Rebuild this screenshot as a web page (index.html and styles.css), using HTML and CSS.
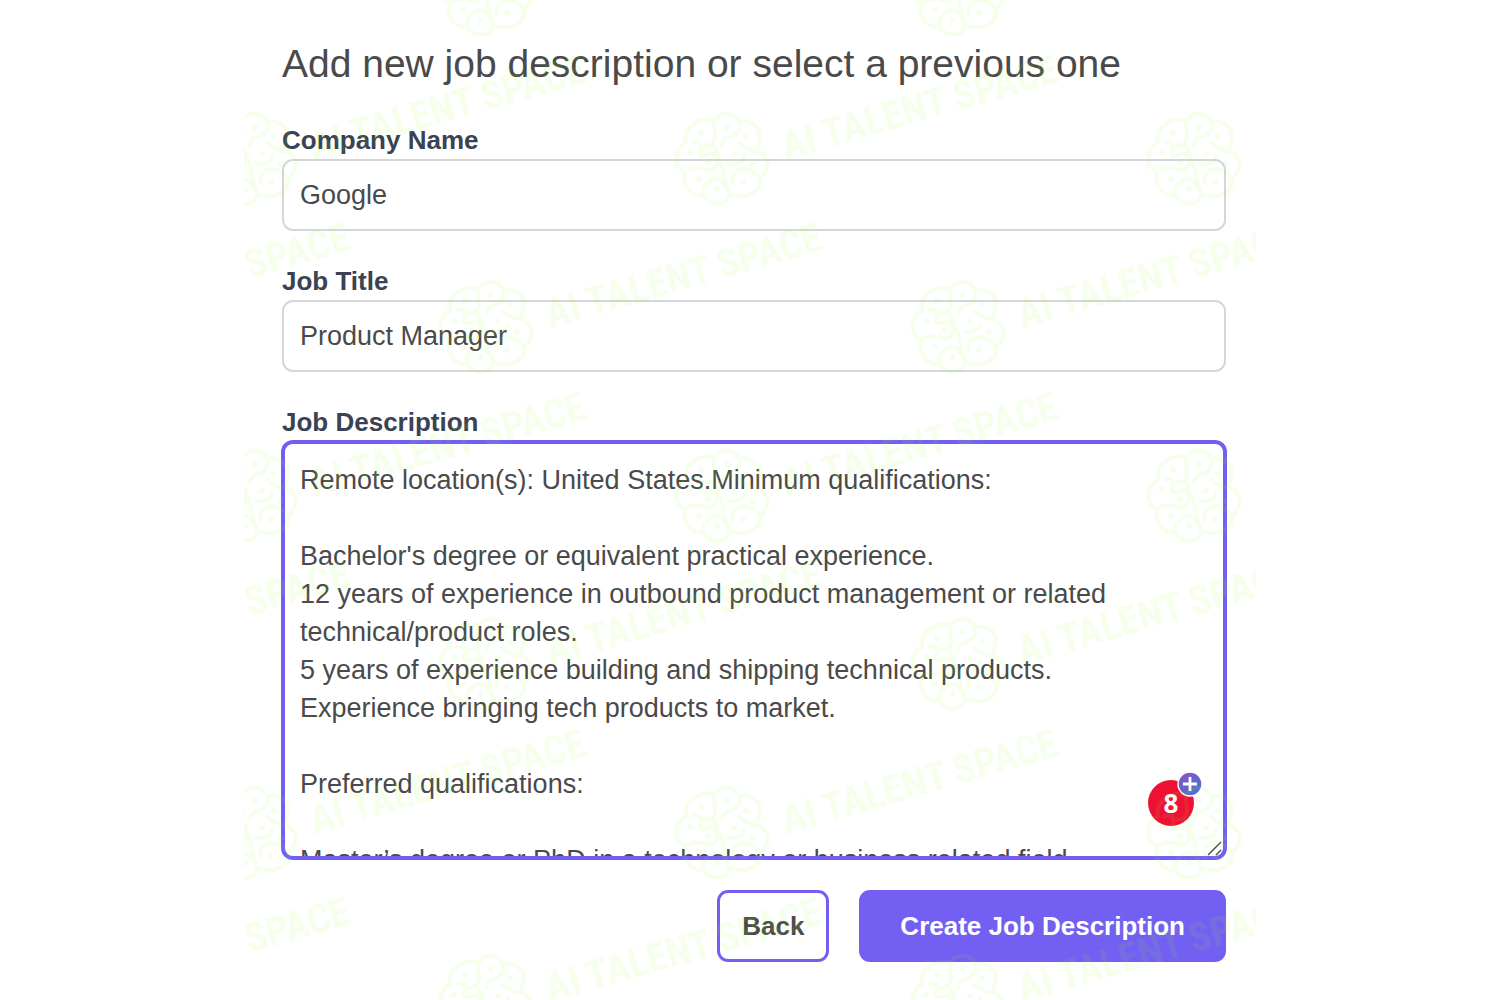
FILE: index.html
```
<!DOCTYPE html>
<html lang="en">
<head>
  <meta charset="UTF-8">
  <meta name="viewport" content="width=device-width, initial-scale=1.0">
  <title>Add new job description</title>
  <link rel="stylesheet" href="styles.css">
</head>
<body>
  <main class="page">
    <h1>Add new job description or select a previous one</h1>

    <form class="job-form">
      <div class="field">
        <label for="company">Company Name</label>
        <input type="text" id="company" value="Google">
      </div>

      <div class="field">
        <label for="title">Job Title</label>
        <input type="text" id="title" value="Product Manager">
      </div>

      <div class="field">
        <label for="description">Job Description</label>
        <div class="editor">
          <textarea id="description" spellcheck="false">Remote location(s): United States.Minimum qualifications:

Bachelor's degree or equivalent practical experience.
12 years of experience in outbound product management or related technical/product roles.
5 years of experience building and shipping technical products.
Experience bringing tech products to market.

Preferred qualifications:

Master’s degree or PhD in a technology or business related field.</textarea>
          <!-- writing assistant: issue count -->
          <div class="issues">8
            <svg class="issues-plus" viewBox="0 0 26 26" aria-hidden="true">
              <defs>
                <linearGradient id="plusFill" x1="0" y1="0" x2="1" y2="1">
                  <stop offset="0.2" stop-color="#7f58c4"/>
                  <stop offset="1" stop-color="#3f74d6"/>
                </linearGradient>
              </defs>
              <circle cx="13" cy="13" r="12" fill="url(#plusFill)" stroke="#fff" stroke-width="1.4"/>
              <path d="M13 6v14M6 13h14" stroke="#fff" stroke-width="2.8"/>
            </svg>
          </div>
          <svg class="grip" viewBox="0 0 16 16" aria-hidden="true">
            <path d="M1 15L14 2M9 15L14 10" fill="none" stroke="#444" stroke-width="1.4"/>
          </svg>
        </div>
      </div>

      <div class="actions">
        <button type="button" class="btn btn-outline">Back</button>
        <button type="submit" class="btn btn-primary">Create Job Description</button>
      </div>
    </form>

    <!-- repeating watermark over the whole page -->
    <svg class="watermark" aria-hidden="true">
      <defs>
        <g id="mark">
          <g fill="none" stroke="#9f3" stroke-width="4" stroke-linecap="round" stroke-linejoin="round">
            <path d="M-7-38C-1-48 14-47 18-37C32-39 41-31 38-19C37-14 36-11 36-8C46-5 49 5 45 12C44 15 42 17 39 19C41 34 25 41 9 35C5 47-11 48-17 37C-29 38-39 28-36 13C-47 9-48-9-35-17C-38-31-22-43-7-38Z"/>
            <path d="M-7-38C-8-28-4-24-7-18C-10-12-18-13-20-15M-9-15C-3-8-3-2 0 4C4 14 2 24 9 35"/>
            <path d="M-28-17C-22-19-18-15-20-9C-24-5-19-2-13-5C-4-8-2 3-6 9C-10 13-16 12-18 9M-34 12C-29 8-25 9-22 10M-12 23C-18 27-19 32-17 36M-12 23C-5 17 2 21 4 27"/>
            <path d="M18-37C20-30 16-24 9-22C4-21 1-17 1-13M18-16C25-11 29-8 36-8M7 4C15 7 22 3 23-3M23 10C30 10 34 14 39 19M12 24C9 15 17 9 25 11"/>
          </g>
          <g fill="#9f3">
            <circle cx="-20" cy="-26" r="3"/>
            <circle cx="6" cy="-32" r="3"/>
            <circle cx="25" cy="-22" r="3"/>
            <circle cx="-31" cy="-6" r="3"/>
            <circle cx="-13" cy="3" r="3"/>
            <circle cx="13" cy="-5" r="3"/>
            <circle cx="32" cy="5" r="3"/>
            <circle cx="-22" cy="20" r="3"/>
            <circle cx="-4" cy="30" r="3"/>
            <circle cx="22" cy="23" r="3"/>
          </g>
          <text class="watermark-text" transform="translate(65 1) rotate(-16)">AI TALENT SPACE</text>
        </g>
        <pattern id="tile" x="427" y="49" width="472" height="337" patternUnits="userSpaceOnUse">
          <use href="#mark" x="50" y="110"/>
          <use href="#mark" x="286" y="278"/>
          <use href="#mark" x="-186" y="278"/>
        </pattern>
      </defs>
      <rect width="100%" height="100%" fill="url(#tile)"/>
    </svg>
  </main>
</body>
</html>
```
FILE: styles.css
```
* {
  box-sizing: border-box;
}

body {
  margin: 0;
  background-color: #fff;
  color: #4a4a4a;
  font-family: "Liberation Sans", Helvetica, Arial, sans-serif;
  font-size: 26px;
  line-height: 38px;
}

.page {
  position: relative;
  max-width: 1012px;
  min-height: 100vh;
  margin: 0 auto;
  padding: 40px 30px 38px 38px;
  overflow: hidden;
}

h1 {
  margin: 0 0 33px;
  font-size: 39px;
  font-weight: 400;
  line-height: 48px;
}

.job-form {
  display: flex;
  flex-direction: column;
  gap: 31px;
}

.field {
  display: flex;
  flex-direction: column;
}

.field label {
  color: #3a4254;
  font-weight: 700;
}

.field input,
.field textarea {
  display: block;
  width: 100%;
  border: 2px solid #d4d6d8;
  border-radius: 11px;
  background-color: #fff;
  color: inherit;
  font: inherit;
  font-size: 27px;
  outline: none;
}

.field input {
  height: 72px;
  padding: 0 16px;
}

.editor {
  position: relative;
}

/* description is shown in its focused state */
.field textarea {
  height: 418px;
  padding: 17px 15px;
  border: 3px solid #735ff2;
  box-shadow: 0 0 0 1px #735ff2;
  overflow: hidden;
  resize: none;
}

.issues {
  position: absolute;
  right: 32px;
  bottom: 33px;
  width: 46px;
  height: 46px;
  border-radius: 50%;
  background-color: #ee1133;
  color: #fff;
  font-family: "Open Sans", sans-serif;
  font-weight: 700;
  line-height: 46px;
  text-align: center;
}

.issues-plus {
  position: absolute;
  top: -9px;
  right: -9px;
  width: 26px;
  height: 26px;
}

.grip {
  position: absolute;
  right: 3px;
  bottom: 3px;
  width: 16px;
  height: 16px;
}

.actions {
  display: flex;
  justify-content: flex-end;
  gap: 30px;
}

.btn {
  height: 72px;
  border: 3px solid #735ff2;
  border-radius: 11px;
  font: inherit;
  font-weight: 700;
  cursor: pointer;
}

.btn-outline {
  padding: 0 22px;
  background-color: #fff;
  color: #4a4a4a;
}

.btn-primary {
  padding: 0 38px;
  background-color: #735ff2;
  color: #fff;
}

.watermark {
  position: absolute;
  top: 0;
  left: 0;
  width: 100%;
  height: 100%;
  opacity: 0.09;
  pointer-events: none;
}

.watermark-text {
  fill: #9f3;
  font-family: "Liberation Sans Narrow", "Roboto Condensed", "DejaVu Sans Condensed", sans-serif;
  font-size: 40px;
  font-weight: 700;
}
```
